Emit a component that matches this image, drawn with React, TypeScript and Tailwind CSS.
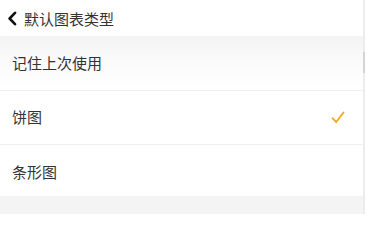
import React from "react";

const font = { fontFamily: '"Noto Sans CJK SC", "Noto Sans", sans-serif' };

function Check() {
  return (
    <svg width="14" height="13" viewBox="0 0 14 13" fill="none">
      <path d="M1.5 7.2 L5.2 11 L12.5 1.5" stroke="#f5a81c" strokeWidth="1.8" strokeLinecap="round" strokeLinejoin="round" />
    </svg>
  );
}

export default function App() {
  return (
    <div className="w-[368px] h-[214px] flex bg-white overflow-hidden" style={font}>
      <div className="w-[363px] flex flex-col">
        <div className="h-[36px] flex items-center pl-[7px] gap-[6px] bg-white">
          <svg width="11" height="15" viewBox="0 0 11 15" fill="none">
            <path d="M8 1.8 L2.6 7.5 L8 13.2" stroke="#111" strokeWidth="2.6" strokeLinecap="round" strokeLinejoin="round" />
          </svg>
          <span className="text-[15px] text-[#333] leading-none">默认图表类型</span>
        </div>
        <div className="flex flex-col bg-gradient-to-b from-[#f4f4f4] via-[#fbfbfb] to-white">
          <div className="h-[55px] flex items-center pl-[12px] text-[15px] text-[#333] border-b border-[#f0f0f0]">
            <span>记住上次使用</span>
          </div>
        </div>
        <div className="h-[54px] flex items-center justify-between pl-[12px] pr-[18px] text-[15px] text-[#333] border-b border-[#f0f0f0] bg-white">
          <span>饼图</span>
          <Check />
        </div>
        <div className="h-[51px] flex items-center pl-[12px] pt-[4px] text-[15px] text-[#333] bg-white">
          <span>条形图</span>
        </div>
        <div className="flex-1 bg-[#f4f4f4]" />
      </div>
      <div className="w-[2px] bg-[#ececec] flex flex-col">
        <div className="mt-[52px] h-[21px] bg-[#d4d4d4]" />
      </div>
      <div className="w-[3px] bg-white" />
    </div>
  );
}
